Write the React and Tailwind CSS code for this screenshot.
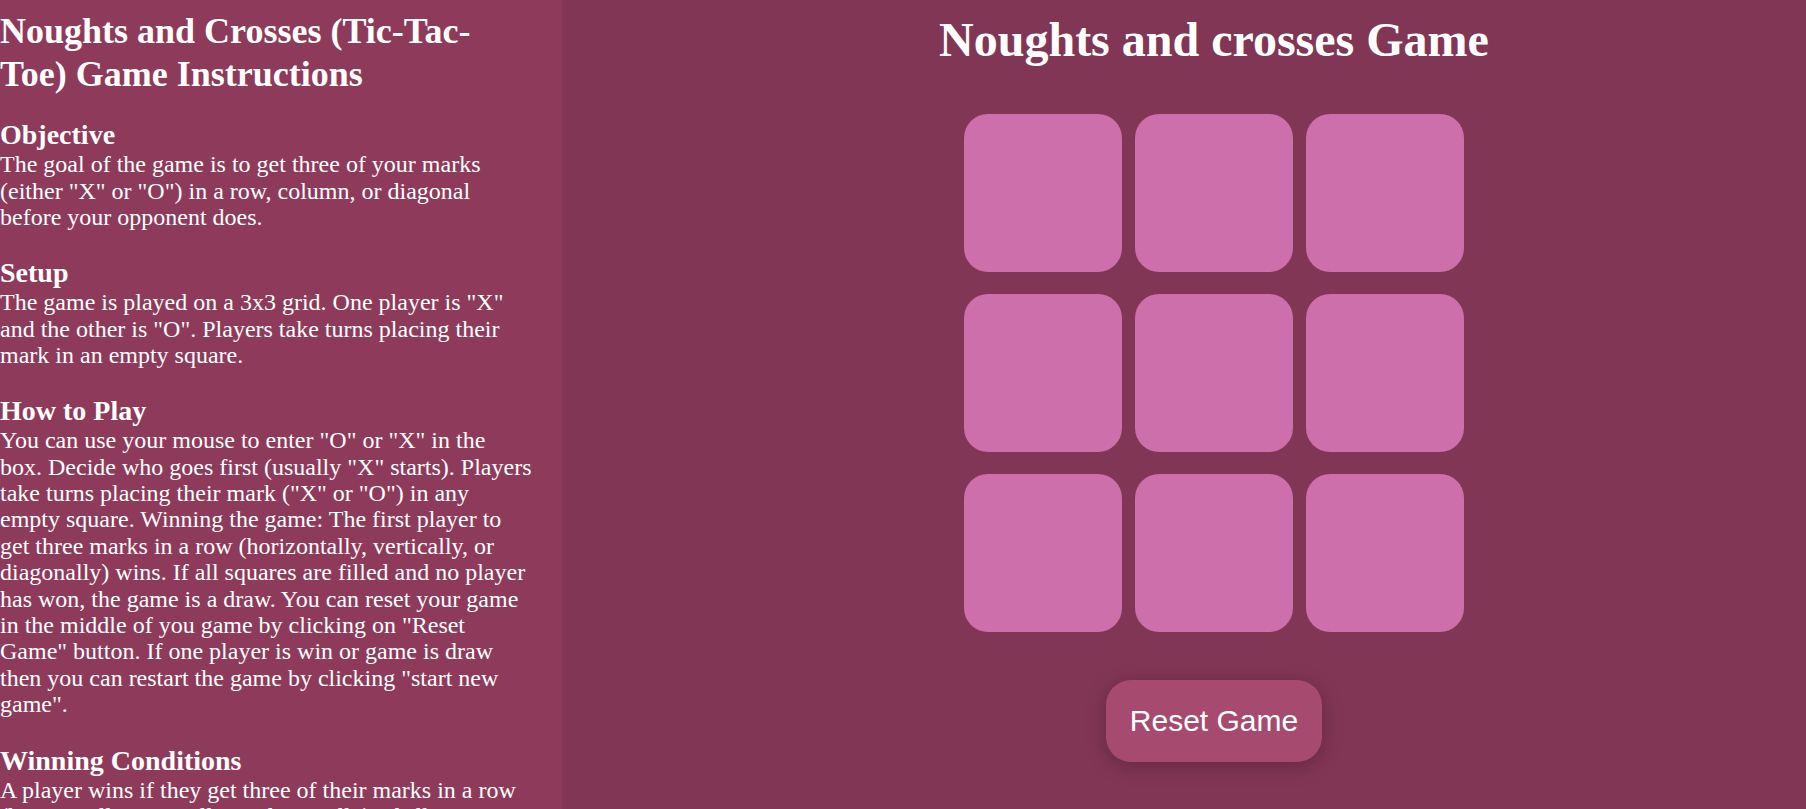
import { useState } from 'react';

const sections = [
  {
    title: 'Objective',
    text: 'The goal of the game is to get three of your marks (either "X" or "O") in a row, column, or diagonal before your opponent does.',
  },
  {
    title: 'Setup',
    text: 'The game is played on a 3x3 grid. One player is "X" and the other is "O". Players take turns placing their mark in an empty square.',
  },
  {
    title: 'How to Play',
    text: 'You can use your mouse to enter "O" or "X" in the box. Decide who goes first (usually "X" starts). Players take turns placing their mark ("X" or "O") in any empty square. Winning the game: The first player to get three marks in a row (horizontally, vertically, or diagonally) wins. If all squares are filled and no player has won, the game is a draw. You can reset your game in the middle of you game by clicking on "Reset Game" button. If one player is win or game is draw then you can restart the game by clicking "start new game".',
  },
  {
    title: 'Winning Conditions',
    text: 'A player wins if they get three of their marks in a row (horizontally, vertically, or diagonally). If all nine squares are filled and neither player has three in a row, the game ends in a draw.',
  },
];

export default function App() {
  const [board, setBoard] = useState(Array(9).fill(null));
  const [turn, setTurn] = useState('X');

  const play = (i) => {
    if (board[i]) return;
    const next = [...board];
    next[i] = turn;
    setBoard(next);
    setTurn(turn === 'X' ? 'O' : 'X');
  };

  const reset = () => {
    setBoard(Array(9).fill(null));
    setTurn('X');
  };

  return (
    <div className="flex h-screen overflow-hidden bg-[#823655] text-white">
      <aside className="w-[562px] shrink-0 bg-[#8e3a5a] pr-[30px] pt-[10px] font-['Liberation_Serif',serif] text-[24px] leading-[26.4px]">
        <h2 className="text-[36px] font-bold leading-[42.7px]">
          Noughts and Crosses (Tic-Tac-Toe) Game Instructions
        </h2>
        {sections.map((s, i) => (
          <section key={s.title} className={i === 0 ? 'mt-[25px]' : 'mt-[28px]'}>
            <h3 className="text-[28px] font-bold leading-[30.8px]">{s.title}</h3>
            <p>{s.text}</p>
          </section>
        ))}
      </aside>

      <main className="flex flex-1 flex-col items-center pl-[60px] pt-[14px]">
        <h1 className="font-['Liberation_Serif',serif] text-[48px] font-bold leading-[1.1]">
          Noughts and crosses Game
        </h1>
        <div className="mt-[47px] grid grid-cols-[repeat(3,158px)] gap-x-[13px] gap-y-[22px]">
          {board.map((v, i) => (
            <button
              key={i}
              onClick={() => play(i)}
              className="flex h-[158px] w-[158px] items-center justify-center rounded-[24px] bg-[#cd6fab] font-['Liberation_Sans',sans-serif] text-[64px] font-bold text-white"
            >
              {v}
            </button>
          ))}
        </div>
        <button
          onClick={reset}
          className="mt-[48px] h-[82px] w-[216px] rounded-[25px] bg-[#a64a6f] font-['Liberation_Sans',sans-serif] text-[30px] text-white shadow-[0_4px_20px_rgba(0,0,0,0.25)]"
        >
          Reset Game
        </button>
      </main>
    </div>
  );
}
